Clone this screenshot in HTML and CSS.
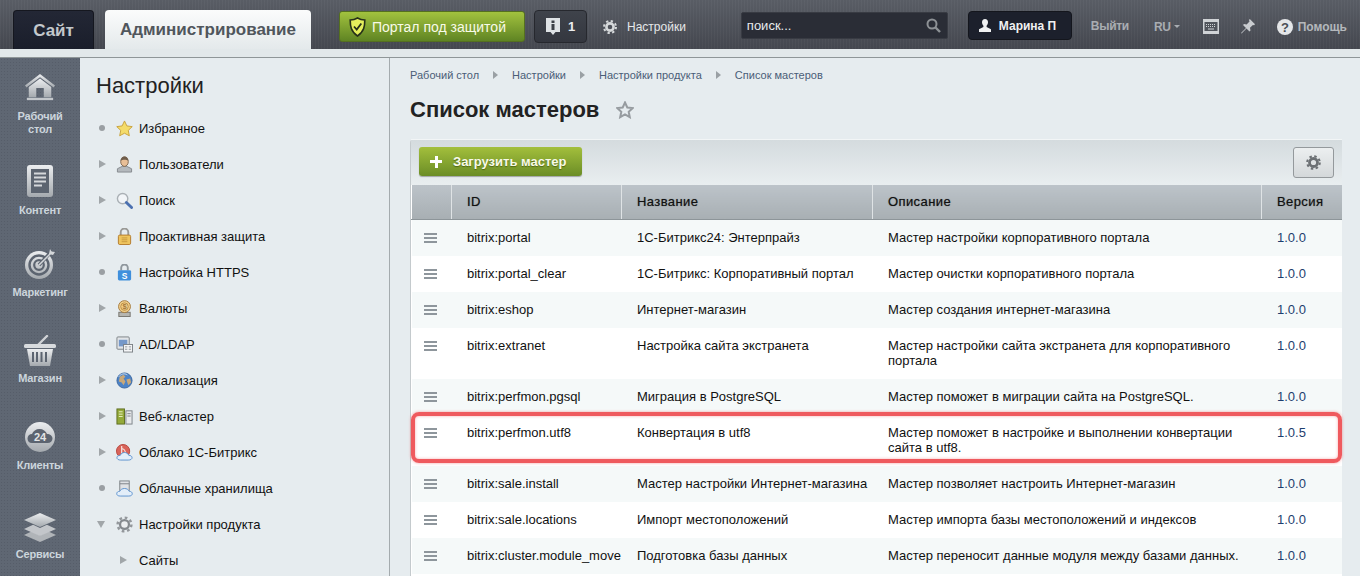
FILE: index.html
```html
<!DOCTYPE html>
<html>

<head>
    <meta charset="utf-8">
    <title>Список мастеров</title>
    <link rel="stylesheet" href="styles.css">
</head>

<body>
<div id="top">
    <div class="tab tab_site">Сайт</div>
    <div class="tab tab_admin">Администрирование</div>
    <div class="portal">
        <svg width="17" height="20" viewBox="0 0 17 20"><path d="M8.500 1C6 2.600 3.500 3 1.200 3c0 6 .6 11.500 7.300 16C15.200 14.500 15.800 9 15.800 3 13.500 3 11 2.600 8.500 1z" fill="#e4ee5c" stroke="#26301a" stroke-width="1.600"/><path d="M5 9.500l2.700 3L12.300 6.500" fill="none" stroke="#26301a" stroke-width="1.800"/></svg>
        <span>Портал под защитой</span>
    </div>
    <div class="notify">
        <svg width="14" height="18" viewBox="0 0 14 18"><path d="M0 0h14v14H9.500L7 17 4.500 14H0z" fill="#dfe3e6"/><path d="M5.500 2.500h3v2.500h-3zM5.500 6h3v6h-3z" fill="#3c4047"/></svg>
        <b>1</b>
    </div>
    <div class="top_settings">
        <svg width="14" height="14" viewBox="0 0 14 14"><circle cx="7" cy="7" r="3.600" fill="none" stroke="#d5d8da" stroke-width="2.600"/><circle cx="7" cy="7" r="6" fill="none" stroke="#d5d8da" stroke-width="2" stroke-dasharray="2.300 2.412"/></svg>
        <span>Настройки</span>
    </div>
    <div class="search">
        <span>поиск...</span>
        <svg width="15" height="15" viewBox="0 0 15 15"><circle cx="6" cy="6" r="4.500" fill="none" stroke="#8d9195" stroke-width="2"/><path d="M9.500 9.500L14 14" stroke="#8d9195" stroke-width="2.400"/></svg>
    </div>
    <div class="user">
        <svg width="12" height="13" viewBox="0 0 12 13"><path d="M6 0c2 0 3 1.300 3 3.300 0 1.500-.7 2.700-1.400 3.400v1.200L12 10.300V13H0v-2.700l4.400-2.400V6.700C3.700 6 3 4.800 3 3.300 3 1.300 4 0 6 0z" fill="#f0f1f2"/></svg>
        <span>Марина П</span>
    </div>
    <div class="top_link logout">Выйти</div>
    <div class="top_link lang">RU<i class="caret"></i></div>
    <svg class="kbd" width="16" height="15" viewBox="0 0 16 15"><rect width="16" height="15" fill="#d0d3d6"/><rect x="1.500" y="3" width="13" height="9" fill="#51555c"/><path d="M3 5.500h10M3 7.500h10" stroke="#d0d3d6" stroke-dasharray="1 1"/><path d="M5 10h6" stroke="#d0d3d6"/></svg>
    <svg class="pin" width="14" height="15" viewBox="0 0 14 15"><path d="M8.800 0L14 5.200 13 6.200 11.900 5.900 9 8.800 9.500 11.400 8.500 12.400 5.500 9.400 .5 14.500 0 14 5 9 2 6 3 5 5.600 5.500 8.500 2.600 8 1z" fill="#c9ccd0"/></svg>
    <div class="help">
        <svg width="16" height="16" viewBox="0 0 16 16"><circle cx="8" cy="8" r="8" fill="#e4e6e8"/><text x="8" y="12.500" text-anchor="middle" class="help_q">?</text></svg>
        <span>Помощь</span>
    </div>
</div>
<div id="strip"></div>

<div id="body">
    <div id="rail">
        <div class="rail_item r_home">
            <svg width="30" height="28" viewBox="0 0 32 28">
                <defs><linearGradient id="steel" x1="0" y1="0" x2="0" y2="1"><stop offset="0" stop-color="#eceef0"/><stop offset="1" stop-color="#a4a9ae"/></linearGradient></defs>
                <path d="M16 0L32 12.500 30.500 14.500 16 3.500 1.500 14.500 0 12.500z" fill="url(#steel)"/>
                <path d="M4 14L16 5 28 14V25H20V15H12V25H4z" fill="url(#steel)"/>
                <path d="M2 25.500H30V28H2z" fill="#c3c7cb"/>
            </svg>
            <span>Рабочий<br>стол</span>
        </div>
        <div class="rail_item r_content">
            <svg width="26" height="32" viewBox="0 0 26 32"><rect width="26" height="32" rx="3" fill="url(#steel)"/><rect x="4" y="4" width="18" height="24" fill="#5c6470"/><path d="M7 8.500H19M7 12.500H19M7 16.500H19M7 20.500H15" stroke="#d5d8db" stroke-width="2"/></svg>
            <span>Контент</span>
        </div>
        <div class="rail_item r_market">
            <svg width="30" height="31" viewBox="0 0 30 31"><circle cx="14" cy="17" r="14" fill="url(#steel)"/><circle cx="14" cy="17" r="9.500" fill="none" stroke="#5c6470" stroke-width="2.400"/><circle cx="14" cy="17" r="4.800" fill="none" stroke="#5c6470" stroke-width="2.200"/><path d="M14 17L27 3" stroke="#5c6470" stroke-width="3.500"/><path d="M14 17L27 4" stroke="#d4d7da" stroke-width="1.500"/><path d="M24 6l1-5 1.500 2.500L30 4l-2 3z" fill="#d4d7da"/></svg>
            <span>Маркетинг</span>
        </div>
        <div class="rail_item r_shop">
            <svg width="32" height="31" viewBox="0 0 32 31"><path d="M14 10L23 1" stroke="#d0d3d6" stroke-width="2.400" stroke-linecap="round"/><rect y="9" width="32" height="4" rx="1.500" fill="#d8dbde"/><path d="M3 14H29L26 31H6z" fill="url(#steel)"/><path d="M9 17V27M13 17V27M17.500 17V27M22 17V27" stroke="#5c6470" stroke-width="2"/></svg>
            <span>Магазин</span>
        </div>
        <div class="rail_item r_clients">
            <svg width="30" height="30" viewBox="0 0 30 30"><circle cx="15" cy="15" r="15" fill="url(#steel)"/><path d="M7 21c-3 0-4.500-2-4.500-4.500S4.500 12 7 12c1-3 4-5 7.500-5s6.500 2 7.500 5c3 0 5.500 1.800 5.500 4.500S25.500 21 22.500 21z" fill="#5c6470"/><text x="15" y="19" text-anchor="middle" class="cloud_num">24</text></svg>
            <span>Клиенты</span>
        </div>
        <div class="rail_item r_services">
            <svg width="32" height="29" viewBox="0 0 32 29"><path d="M16 14.500L32 22 16 29 0 22z" fill="#b0b4b8"/><path d="M16 7.500L32 15 16 22.500 0 15z" fill="#5c6470"/><path d="M16 8.500L32 16 16 23 0 16z" fill="#c3c6ca"/><path d="M16 0L32 7.500 16 15 0 7.500z" fill="#5c6470"/><path d="M16 0L32 7 16 14 0 7z" fill="url(#steel)"/></svg>
            <span>Сервисы</span>
        </div>
    </div>

    <div id="menu">
        <div class="menu_title">Настройки</div>
        <div class="menu_item"><i class="dot"></i>
            <svg width="17" height="17" viewBox="0 0 18 18"><path d="M9 1l2.500 5.300 5.700.7-4.200 4 1.100 5.700L9 14l-5.100 2.700L5 11 .8 7l5.700-.7z" fill="#f4dc6a" stroke="#c8a23c"/></svg>
            <span>Избранное</span></div>
        <div class="menu_item"><i class="arrow"></i>
            <svg width="17" height="17" viewBox="0 0 18 18"><path d="M1.500 17v-3.500L6.500 11h5l5 2.500V17z" fill="#b4b9bd" stroke="#85898d"/><ellipse cx="9" cy="6" rx="4" ry="5" fill="#e8bf97" stroke="#7d6650"/><path d="M5 5c0-3 2-4.500 4-4.500s4 1.500 4 4.500C11 3.500 7 3.500 5 5z" fill="#6f5d4b"/></svg>
            <span>Пользователи</span></div>
        <div class="menu_item"><i class="arrow"></i>
            <svg width="17" height="17" viewBox="0 0 18 18"><circle cx="7" cy="7" r="5.500" fill="#f2f5f8" stroke="#aab0b5" stroke-width="1.500"/><path d="M11 11l5.500 5.500" stroke="#4b70b0" stroke-width="3" stroke-linecap="round"/></svg>
            <span>Поиск</span></div>
        <div class="menu_item"><i class="arrow"></i>
            <svg width="17" height="17" viewBox="0 0 18 18"><path d="M5 8V4.500a4 4 0 018 0V8" fill="none" stroke="#9a9a96" stroke-width="2"/><rect x="2.500" y="7.500" width="13" height="10" rx="1.500" fill="#eec45e" stroke="#b37a2c"/><path d="M6 10.500h6M6 12.500h6M6 14.500h6" stroke="#c99a3e"/></svg>
            <span>Проактивная защита</span></div>
        <div class="menu_item"><i class="dot"></i>
            <svg width="17" height="17" viewBox="0 0 18 18"><path d="M5.500 7V4a3.500 3.500 0 017 0v3" fill="none" stroke="#8f979d" stroke-width="2"/><rect x="2" y="6.500" width="14" height="11" rx="1.500" fill="#3f8fdc"/><text x="9" y="15.500" text-anchor="middle" class="lock_s">S</text></svg>
            <span>Настройка HTTPS</span></div>
        <div class="menu_item"><i class="arrow"></i>
            <svg width="17" height="17" viewBox="0 0 18 18"><rect x="3" y="13" width="12" height="4.500" fill="#b5b5b0" stroke="#77756f"/><circle cx="9" cy="7" r="6.300" fill="#f1cf8b" stroke="#a5793a"/><circle cx="9" cy="7" r="4" fill="none" stroke="#bb8d45"/><text x="9" y="9.800" text-anchor="middle" class="coin_s">$</text></svg>
            <span>Валюты</span></div>
        <div class="menu_item"><i class="dot"></i>
            <svg width="17" height="17" viewBox="0 0 18 18"><rect x="1" y="1" width="13" height="13" rx="1" fill="#e2e5e8" stroke="#7b8186"/><rect x="3" y="4" width="9" height="7" fill="#7598c9"/><rect x="8" y="9" width="9.500" height="8" fill="#f5f6f7" stroke="#7b8186"/><path d="M9.500 11.500H12M9.500 14H12M13.500 11.500H16M13.500 14H16" stroke="#8a9096"/></svg>
            <span>AD/LDAP</span></div>
        <div class="menu_item"><i class="arrow"></i>
            <svg width="17" height="17" viewBox="0 0 18 18"><circle cx="9" cy="9" r="8" fill="#4c83c7" stroke="#3b679f"/><path d="M4 5l4-2 2 2-2 2 2 3-2 4-2-3-3-1zM11 8l4-1 1 4-3 3-1-3z" fill="#c9a878"/><path d="M3 5c2-3 6-4 9-2" fill="none" stroke="#cfe2f5"/></svg>
            <span>Локализация</span></div>
        <div class="menu_item"><i class="arrow"></i>
            <svg width="17" height="17" viewBox="0 0 18 18"><rect x="1" y="1" width="8" height="16" fill="#94aa3a" stroke="#5e6e20"/><path d="M3 4h4M3 6.500h4M3 9h4" stroke="#eaf0c4"/><rect x="10.500" y="3" width="6.500" height="14" fill="#e8eaec" stroke="#7b8186"/><path d="M12 6h3.500M12 8.500h3.500" stroke="#7b8186"/></svg>
            <span>Веб-кластер</span></div>
        <div class="menu_item"><i class="arrow"></i>
            <svg width="17" height="17" viewBox="0 0 18 18"><circle cx="7.500" cy="7.500" r="7" fill="#d9645a" stroke="#b6463e"/><path d="M6 2v9M6 5c2 0 4 2 4 5" stroke="#f6e0dc" fill="none" stroke-width="1.300"/><path d="M5 17c-2.500 0-4-1-4-2.500S2.500 12 4.500 12c.8-2 2.500-3 4.500-3s3.800 1 4.500 3c2 0 3.500 1 3.500 2.500S15.500 17 13 17z" fill="#e3eef9" stroke="#5b92cf"/></svg>
            <span>Облако 1С-Битрикс</span></div>
        <div class="menu_item"><i class="dot"></i>
            <svg width="17" height="17" viewBox="0 0 18 18"><rect x="4" y="1" width="10" height="10" fill="#dfe2e5" stroke="#7b8186"/><path d="M4 4h10" stroke="#7b8186"/><path d="M4.500 17C2 17 .8 16 .8 14.500S2 12 4 12c.8-2 2.800-3 5-3s4.200 1 5 3c2 0 3.200 1 3.200 2.500S16 17 13.500 17z" fill="#e3eef9" stroke="#5b92cf"/></svg>
            <span>Облачные хранилища</span></div>
        <div class="menu_item"><i class="arrow_down"></i>
            <svg width="17" height="17" viewBox="0 0 18 18"><circle cx="9" cy="9" r="4.700" fill="#eceeef" stroke="#85898d" stroke-width="2.400"/><circle cx="9" cy="9" r="7.300" fill="none" stroke="#93979b" stroke-width="2.600" stroke-dasharray="2.860 2.870"/></svg>
            <span>Настройки продукта</span></div>
        <div class="menu_item sub"><i class="arrow"></i><span>Сайты</span></div>
    </div>

    <div id="content">
        <div class="crumbs">
            <a>Рабочий стол</a><i class="crumb_arrow"></i>
            <a>Настройки</a><i class="crumb_arrow"></i>
            <a>Настройки продукта</a><i class="crumb_arrow"></i>
            <a>Список мастеров</a>
        </div>
        <div class="page_title">
            <h1>Список мастеров</h1>
            <svg width="18" height="18" viewBox="0 0 18 18"><path d="M9 1.500l2.300 5 5.400.6-4 3.700 1.100 5.400L9 13.500l-4.800 2.700 1.100-5.400-4-3.700 5.400-.6z" fill="none" stroke="#979ca0" stroke-width="2"/></svg>
        </div>
        <div class="panel">
            <div class="toolbar">
                <div class="btn_add"><i class="plus"></i><span>Загрузить мастер</span></div>
                <div class="btn_gear">
                    <svg width="15" height="15" viewBox="0 0 15 15"><circle cx="7.500" cy="7.500" r="4" fill="none" stroke="#6c7074" stroke-width="2.800"/><circle cx="7.500" cy="7.500" r="6.300" fill="none" stroke="#6c7074" stroke-width="2" stroke-dasharray="2.470 2.478"/></svg>
                </div>
            </div>
            <table class="grid">
                <colgroup><col class="c_grip"><col class="c_id"><col class="c_name"><col class="c_desc"><col class="c_ver"></colgroup>
                <thead>
                <tr><th></th><th>ID</th><th>Название</th><th>Описание</th><th>Версия</th></tr>
                </thead>
                <tbody>
                <tr><td><i class="grip"></i></td><td>bitrix:portal</td><td>1С-Битрикс24: Энтерпрайз</td><td>Мастер настройки корпоративного портала</td><td class="ver">1.0.0</td></tr>
                <tr><td><i class="grip"></i></td><td>bitrix:portal_clear</td><td>1С-Битрикс: Корпоративный портал</td><td>Мастер очистки корпоративного портала</td><td class="ver">1.0.0</td></tr>
                <tr><td><i class="grip"></i></td><td>bitrix:eshop</td><td>Интернет-магазин</td><td>Мастер создания интернет-магазина</td><td class="ver">1.0.0</td></tr>
                <tr><td><i class="grip"></i></td><td>bitrix:extranet</td><td>Настройка сайта экстранета</td><td>Мастер настройки сайта экстранета для корпоративного портала</td><td class="ver">1.0.0</td></tr>
                <tr><td><i class="grip"></i></td><td>bitrix:perfmon.pgsql</td><td>Миграция в PostgreSQL</td><td>Мастер поможет в миграции сайта на PostgreSQL.</td><td class="ver">1.0.0</td></tr>
                <tr><td><i class="grip"></i></td><td>bitrix:perfmon.utf8</td><td>Конвертация в utf8</td><td>Мастер поможет в настройке и выполнении конвертации сайта в utf8.</td><td class="ver">1.0.5</td></tr>
                <tr><td><i class="grip"></i></td><td>bitrix:sale.install</td><td>Мастер настройки Интернет-магазина</td><td>Мастер позволяет настроить Интернет-магазин</td><td class="ver">1.0.0</td></tr>
                <tr><td><i class="grip"></i></td><td>bitrix:sale.locations</td><td>Импорт местоположений</td><td>Мастер импорта базы местоположений и индексов</td><td class="ver">1.0.0</td></tr>
                <tr><td><i class="grip"></i></td><td>bitrix:cluster.module_move</td><td>Подготовка базы данных</td><td>Мастер переносит данные модуля между базами данных.</td><td class="ver">1.0.0</td></tr>
                <tr class="last"><td></td><td></td><td></td><td></td><td></td></tr>
                </tbody>
            </table>
            <div class="mark"></div>
        </div>
    </div>
</div>
</body>

</html>
```

FILE: styles.css
```css
* {
    box-sizing: border-box;
}

html, body {
    margin: 0;
    height: 576px;
    overflow: hidden;
}

body {
    font-family: "Liberation Sans", Arial, sans-serif;
    font-size: 13px;
    color: #111;
    background: #e6ecef;
}

/* top bar */
#top {
    display: flex;
    align-items: flex-start;
    height: 49px;
    padding: 10px 0 0 13px;
    background: repeating-linear-gradient(90deg, rgba(255, 255, 255, .03) 0 1px, transparent 1px 3px), linear-gradient(#595d65, #44474f);
}

#strip {
    height: 9px;
    background: #e2e8ea;
    border-bottom: 1px solid #8f9698;
}

.tab {
    height: 39px;
    font-size: 17px;
    font-weight: bold;
    line-height: 40px;
    text-align: center;
    border-radius: 4px 4px 0 0;
}

.tab_site {
    width: 81px;
    color: #c3c8cc;
    background: linear-gradient(#232735, #1a1e2b);
    border: 1px solid #15171f;
    border-bottom: 0;
}

.tab_admin {
    width: 206px;
    margin-left: 11px;
    color: #50565c;
    background: linear-gradient(#fbfcfc, #e4e9eb);
}

.portal {
    display: flex;
    align-items: center;
    gap: 6px;
    width: 186px;
    height: 31px;
    margin: 1px 0 0 28px;
    padding-left: 9px;
    color: #f8fae8;
    font-size: 14px;
    background: linear-gradient(#a2c23e, #5f8423);
    border: 1px solid #55701f;
    border-radius: 3px;
}

.notify {
    display: flex;
    align-items: center;
    gap: 8px;
    width: 53px;
    height: 33px;
    margin-left: 9px;
    padding-left: 11px;
    color: #eceef0;
    font-size: 13px;
    background: linear-gradient(#3f434b, #34373f);
    border: 1px solid #26282e;
    border-radius: 4px;
}

.top_settings {
    display: flex;
    align-items: center;
    gap: 10px;
    height: 33px;
    margin-left: 16px;
    color: #e6e8ea;
    font-size: 12px;
}

.search {
    display: flex;
    align-items: center;
    justify-content: space-between;
    width: 207px;
    height: 27px;
    margin: 2px 0 0 55px;
    padding: 0 6px 0 5px;
    color: #e8eaec;
    font-size: 13px;
    background: #2a2d36;
    border: 1px solid #383b43;
    border-radius: 2px;
}

.user {
    display: flex;
    align-items: center;
    gap: 8px;
    width: 104px;
    height: 29px;
    margin: 1px 0 0 20px;
    padding-left: 10px;
    color: #f0f1f2;
    font-size: 12px;
    font-weight: bold;
    background: #1c202c;
    border: 1px solid #14161d;
    border-radius: 4px;
}

.top_link {
    height: 33px;
    color: #a9adb2;
    font-size: 12px;
    font-weight: bold;
    line-height: 32px;
    letter-spacing: -.3px;
}

.logout {
    margin-left: 19px;
}

.lang {
    display: flex;
    align-items: center;
    gap: 3px;
    margin-left: 25px;
}

.caret {
    border: 3px solid transparent;
    border-top-color: #a9adb2;
    border-bottom: 0;
}

.kbd {
    margin: 9px 0 0 23px;
}

.pin {
    margin: 9px 0 0 22px;
}

.help {
    display: flex;
    align-items: center;
    gap: 5px;
    height: 33px;
    margin-left: 22px;
    color: #b4b8bc;
    font-size: 12px;
    font-weight: bold;
}

.help_q {
    fill: #4a4e55;
    font-size: 13px;
    font-weight: bold;
}

/* main */
#body {
    display: flex;
    height: 518px;
}

#rail {
    flex: none;
    width: 80px;
    color: #ccd5dc;
    background: radial-gradient(#565d69 1px, transparent 1px) 0 0 / 3px 3px, #5f6773;
}

.rail_item {
    display: flex;
    flex-direction: column;
    align-items: center;
    font-size: 11px;
    font-weight: bold;
    line-height: 13px;
    letter-spacing: -.2px;
    text-align: center;
}

.r_home {
    height: 92px;
    padding-top: 15px;
}

.r_home span {
    margin-top: 9px;
}

.r_content {
    height: 84px;
    padding-top: 15px;
}

.r_content span {
    margin-top: 7px;
}

.r_market {
    height: 97px;
    padding-top: 14px;
}

.r_market span {
    margin-top: 7px;
}

.r_shop {
    height: 88px;
    padding-top: 4px;
}

.r_shop span {
    margin-top: 6px;
}

.r_clients {
    height: 91px;
    padding-top: 3px;
}

.r_clients span {
    margin-top: 7px;
}

.r_services {
    padding-top: 3px;
}

.r_services span {
    margin-top: 6px;
}

#menu {
    flex: none;
    width: 310px;
    padding-left: 16px;
    background: #e6ecef;
    border-right: 1px solid #a4abae;
}

.menu_title {
    height: 52px;
    padding-top: 15px;
    font-size: 22px;
    line-height: 26px;
    color: #222;
}

.menu_item {
    display: flex;
    align-items: center;
    height: 36px;
}

.menu_item svg {
    flex: none;
    margin: 0 6px 0 9px;
}

.dot,
.arrow,
.arrow_down {
    flex: none;
    display: block;
    width: 11px;
}

.dot::before {
    content: "";
    display: block;
    width: 6px;
    height: 6px;
    margin-left: 3px;
    background: #9a9fa3;
    border-radius: 50%;
}

.arrow::before {
    content: "";
    display: block;
    width: 0;
    margin-left: 3px;
    border: 4px solid transparent;
    border-left: 7px solid #a1a6a9;
    border-right: 0;
}

.arrow_down::before {
    content: "";
    display: block;
    width: 0;
    margin-left: 1px;
    border: 4px solid transparent;
    border-top: 7px solid #a1a6a9;
    border-bottom: 0;
}

.sub {
    padding-left: 21px;
}

.sub span {
    margin-left: 11px;
}

.lock_s {
    fill: #fff;
    font-size: 9px;
    font-weight: bold;
}

.coin_s {
    fill: #a5793a;
    font-size: 8px;
    font-weight: bold;
}

.cloud_num {
    fill: #e2e4e6;
    font-size: 11px;
    font-weight: bold;
}

#content {
    flex: 1;
    min-width: 0;
    padding: 0 18px 0 20px;
}

.crumbs {
    display: flex;
    align-items: center;
    height: 35px;
    padding-bottom: 2px;
    font-size: 11px;
    color: #4a5d77;
}

.crumb_arrow {
    width: 0;
    margin: 0 14px 0 14px;
    border: 4px solid transparent;
    border-left: 5px solid #9aa0a4;
    border-right: 0;
}

.page_title {
    display: flex;
    align-items: center;
    gap: 17px;
    height: 34px;
}

h1 {
    margin: 0;
    font-size: 22px;
    line-height: 34px;
    color: #222;
}

/* panel + table */
.panel {
    position: relative;
    margin-top: 12px;
    background: #fff;
    border-left: 1px solid #c4cacd;
    border-radius: 4px 4px 0 0;
}

.toolbar {
    display: flex;
    align-items: flex-start;
    justify-content: space-between;
    height: 46px;
    padding: 7px 8px 0 8px;
    background: linear-gradient(#d4dbde, #e9eef0);
    border-top: 1px solid #f2f5f6;
}

.btn_add {
    display: flex;
    align-items: center;
    width: 163px;
    height: 29px;
    padding-left: 11px;
    color: #f8fae8;
    font-size: 13px;
    font-weight: bold;
    background: linear-gradient(#a3bf3c, #6b8d26);
    border-radius: 3px;
    box-shadow: 0 1px 1px rgba(0, 0, 0, .3);
}

.btn_add span {
    margin-left: 11px;
    text-shadow: 0 1px 1px rgba(60, 80, 10, .7);
}

.plus {
    width: 12px;
    height: 12px;
    background: linear-gradient(#fff, #fff) center / 12px 3px no-repeat, linear-gradient(#fff, #fff) center / 3px 12px no-repeat;
}

.btn_gear {
    display: flex;
    align-items: center;
    justify-content: center;
    width: 41px;
    height: 31px;
    background: linear-gradient(#eceff0, #d4d8da);
    border: 1px solid #94999c;
    border-radius: 3px;
}

.grid {
    width: 100%;
    table-layout: fixed;
    border-collapse: collapse;
}

.c_grip {
    width: 40px;
}

.c_id {
    width: 170px;
}

.c_name {
    width: 251px;
}

.c_desc {
    width: 389px;
}

th {
    height: 34px;
    padding: 0 0 0 15px;
    font-weight: normal;
    letter-spacing: .4px;
    text-align: left;
    background: linear-gradient(#bcc3c9, #a8afb3);
    border-left: 1px solid #dfe3e5;
    border-bottom: 1px solid #8d9599;
    text-shadow: 0 0 1px rgba(0, 0, 0, .5);
}

th:first-child {
    border-left: 0;
}

td {
    padding: 10px 0 11px 15px;
    line-height: 15px;
    vertical-align: top;
    border-left: 1px solid transparent;
}

td:nth-child(4) {
    padding-right: 16px;
}

tbody tr:nth-child(odd) {
    background: #f5f9f9;
}

tbody tr.last {
    background: #fff;
}

.ver {
    color: #1d3e6e;
}

.grip {
    display: block;
    width: 13px;
    height: 10px;
    margin: 3px 0 0 -3px;
    background: repeating-linear-gradient(#8e969c 0 2px, transparent 2px 4px);
}

.mark {
    position: absolute;
    top: 273px;
    left: 0;
    right: 0;
    height: 51px;
    border: 4px solid #ef5a5e;
    border-radius: 8px;
    box-shadow: 0 0 3px rgba(239, 90, 94, .6), inset 0 0 3px rgba(239, 90, 94, .5);
}
```
